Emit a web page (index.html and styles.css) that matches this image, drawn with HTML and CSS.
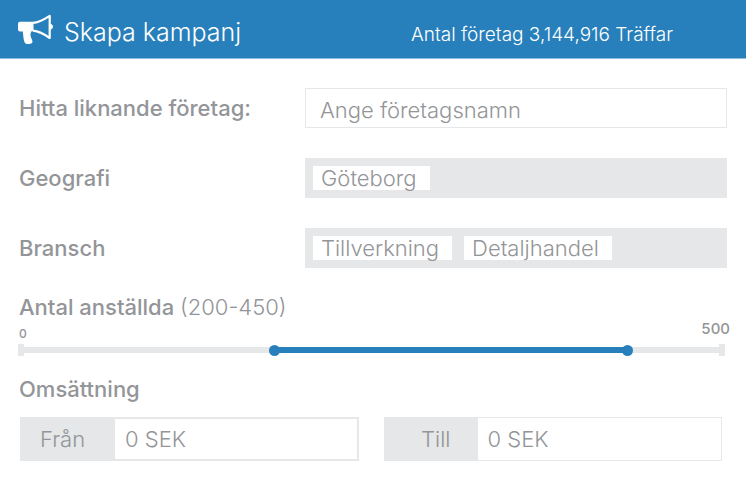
FILE: index.html
```html
<!DOCTYPE html>
<html lang="sv">
<head>
<meta charset="utf-8">
<meta name="viewport" content="width=device-width, initial-scale=1">
<title>Skapa kampanj</title>
<link rel="stylesheet" href="styles.css">
</head>
<body>
<header class="topbar">
  <svg class="topbar-icon" viewBox="0 0 36 32" aria-hidden="true">
    <path d="M2 7.700H15.500V17.300H13.500C12.300 19.500 12.200 21 13 23.500C13.500 25 14.500 26 14.500 28C14 29.500 12.500 29.900 11 29.900H8.500C6.500 29.500 6 27.500 5.500 24L4.800 17.500H2Q0 17.300 0 15.500V9.700Q0 7.700 2 7.700Z" fill="#fff"/>
    <path d="M15 8.900C21 8.500 26 5.500 31.700 1.800V24C26 19.800 21 17.200 15 16.600" fill="none" stroke="#fff" stroke-width="2.200" stroke-linejoin="round"/>
    <path d="M32 9.800C36 10.500 36 15 32 15.800Z" fill="#fff"/>
  </svg>
  <h1 class="topbar-title">Skapa kampanj</h1>
  <p class="topbar-hits">Antal företag 3,144,916 Träffar</p>
</header>
<main>
  <form class="campaign">
    <div class="row">
      <label class="label" for="company">Hitta liknande företag:</label>
      <input class="search" id="company" type="text" placeholder="Ange företagsnamn">
    </div>
    <div class="row">
      <span class="label" id="geo-label">Geografi</span>
      <div class="tags" role="group" aria-labelledby="geo-label">
        <button class="tag" type="button">Göteborg</button>
      </div>
    </div>
    <div class="row">
      <span class="label" id="trade-label">Bransch</span>
      <div class="tags" role="group" aria-labelledby="trade-label">
        <button class="tag" type="button">Tillverkning</button>
        <button class="tag" type="button">Detaljhandel</button>
      </div>
    </div>
    <section class="employees">
      <h2 class="label" id="employees-label">Antal anställda <span class="interval">(200-450)</span></h2>
      <div class="scale"><span class="scale-min">0</span><span class="scale-max">500</span></div>
      <div class="slider" role="group" aria-labelledby="employees-label">
        <div class="track"></div>
        <div class="fill" style="margin-left:36.2%;width:50.1%"></div>
        <input class="handle" type="range" min="0" max="500" value="180" aria-labelledby="employees-label">
        <input class="handle" type="range" min="0" max="500" value="434" aria-labelledby="employees-label">
      </div>
    </section>
    <section class="revenue">
      <h2 class="label">Omsättning</h2>
      <div class="amounts">
        <div class="amount">
          <label class="prefix" for="from">Från</label>
          <input class="value value-active" id="from" type="text" value="0 SEK">
        </div>
        <div class="amount">
          <label class="prefix prefix-end" for="to">Till</label>
          <input class="value" id="to" type="text" value="0 SEK">
        </div>
      </div>
    </section>
  </form>
</main>
</body>
</html>
```

FILE: styles.css
```css
* {
  box-sizing: border-box;
}

body {
  margin: 0;
  background: #fff;
  color: #939598;
  font-family: Inter, "Open Sans", sans-serif;
  font-size: 22px;
  font-weight: 300;
  line-height: 24px;
}

input,
button {
  margin: 0;
  border: 0;
  border-radius: 0;
  color: inherit;
  font: inherit;
}

.topbar {
  display: grid;
  grid-template-columns: 36px 337px 1fr;
  align-items: center;
  column-gap: 10px;
  min-height: 59px;
  padding: 6px 18px 0;
  background: #2780bb;
  border-bottom: 1px solid #8fbddc;
  color: #fff;
}

.topbar-icon {
  width: 36px;
  height: 32px;
  margin-bottom: 4px;
}

.topbar-title {
  margin: 0;
  font-size: 25px;
  font-weight: 300;
}

.topbar-hits {
  margin: 6px 0 0;
  font-size: 19px;
}

.topbar-title,
.topbar-hits {
  white-space: nowrap;
}

.campaign {
  display: flex;
  flex-direction: column;
  gap: 30px;
  padding: 29px 19px 24px;
}

.row {
  display: grid;
  grid-template-columns: 286px 1fr;
}

.label {
  margin: 0;
  font-size: 22px;
  font-weight: 500;
}

.row .label {
  line-height: 40px;
}

.search {
  width: 100%;
  height: 40px;
  padding: 4px 14px 0;
  border: 1px solid #e6e7e8;
  background: #fff;
}

.search::placeholder {
  color: inherit;
  opacity: 1;
}

.tags {
  display: flex;
  align-items: flex-start;
  gap: 12px;
  height: 40px;
  padding: 8px;
  background: #e5e7e9;
}

.tag {
  height: 24px;
  padding: 0 13px 0 8px;
  background: #fff;
  line-height: 24px;
}

.interval {
  font-weight: 300;
}

.employees {
  margin-top: -3px;
}

.scale {
  display: flex;
  justify-content: space-between;
  align-items: flex-end;
  height: 22px;
  margin-right: -3px;
  font-size: 12px;
  font-weight: 500;
  line-height: 14px;
}

.scale-max {
  align-self: flex-start;
  padding-top: 3px;
  font-size: 15px;
}

.slider {
  display: grid;
  align-items: center;
  height: 18px;
  margin: 0 2px 0 -1px;
}

.slider > * {
  grid-area: 1 / 1;
}

.track {
  height: 12px;
  border: solid #e5e7e9;
  border-width: 0 6px;
  background: linear-gradient(#e5e7e9, #e5e7e9) center / 100% 6px no-repeat;
}

.fill {
  height: 6px;
  background: #2780bb;
}

.handle {
  width: 100%;
  height: 12px;
  appearance: none;
  background: none;
  pointer-events: none;
}

.handle::-webkit-slider-thumb {
  width: 11px;
  height: 11px;
  appearance: none;
  border-radius: 50%;
  background: #2780bb;
  pointer-events: auto;
}

.revenue {
  margin-top: -12px;
}

.amounts {
  display: grid;
  grid-template-columns: repeat(2, minmax(0, 1fr));
  gap: 25px;
  margin: 16px 5px 0 1px;
}

.amount {
  display: flex;
  height: 44px;
}

.prefix {
  flex: 0 0 93px;
  padding: 0 26px 0 20px;
  background: #e5e7e9;
  line-height: 45px;
}

.prefix-end {
  text-align: right;
}

.value {
  flex: 1;
  min-width: 0;
  padding: 0 10px;
  border: 1px solid #e6e7e8;
  background: #fff;
}

.value-active {
  border-width: 2px;
}
```
